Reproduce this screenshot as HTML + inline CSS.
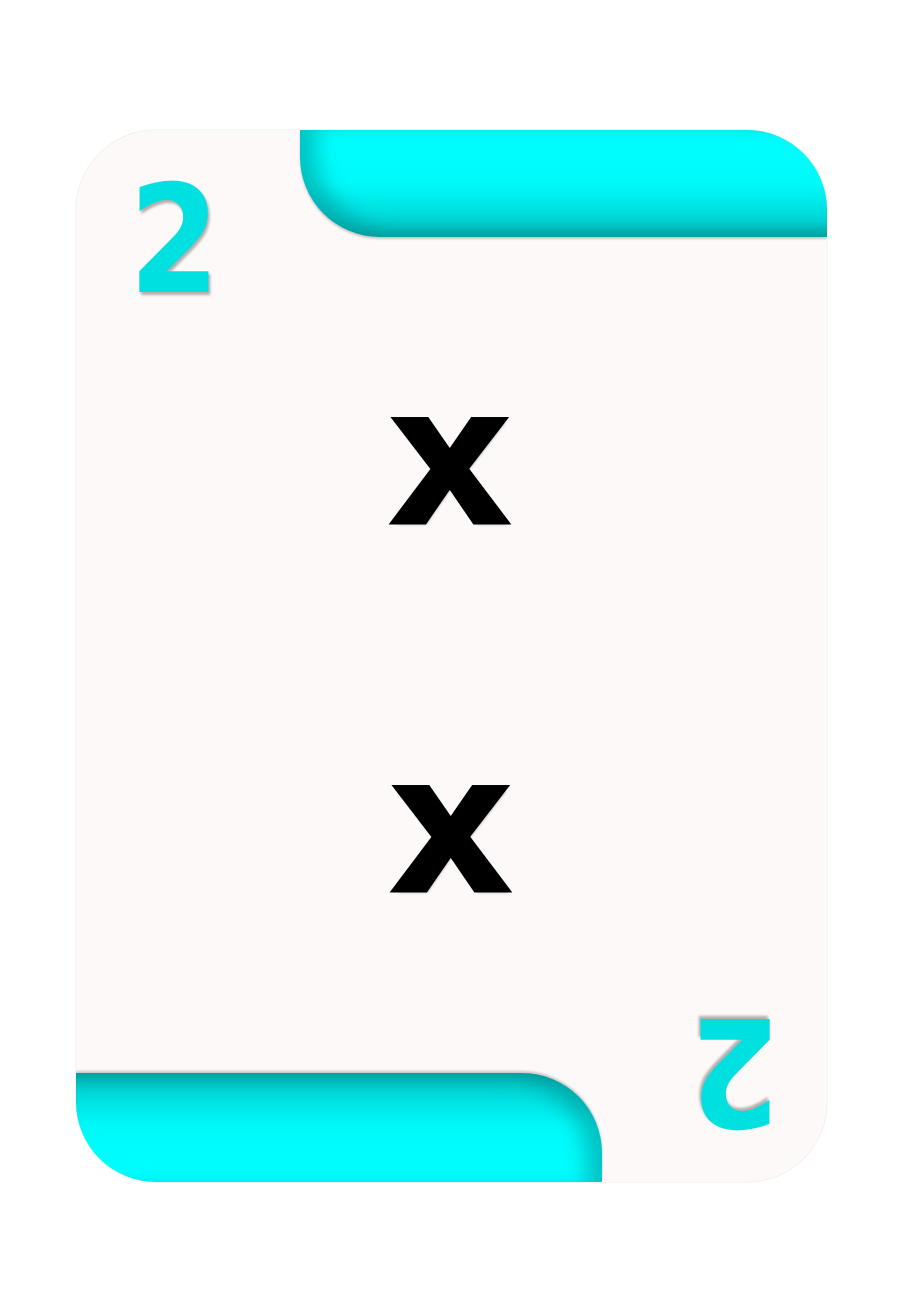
<!DOCTYPE html>
<html><head><meta charset="utf-8">
<style>
html,body{margin:0;padding:0;background:#fff;width:902px;height:1313px;overflow:hidden}
.card{position:absolute;left:76px;top:130px;width:751px;height:1052px;border-radius:80px;background:#fcf9f8;overflow:hidden;box-shadow:0 0 1px rgba(0,0,0,0.25)}
.bandT{position:absolute;left:224px;top:0;width:527px;height:107px;border-bottom-left-radius:80px;
background:linear-gradient(180deg,#00ffff 0%,#00fafa 50%,#00d8d8 85%,#00baba 100%);
box-shadow:0 2px 2px rgba(0,0,0,0.2)}
.bandT::after{content:"";position:absolute;inset:0;border-bottom-left-radius:80px;box-shadow:inset 16px -6px 20px rgba(0,90,90,0.35)}
.bandB{position:absolute;left:0;top:943px;width:526px;height:109px;border-top-right-radius:80px;
background:linear-gradient(0deg,#00ffff 0%,#00fafa 50%,#00d8d8 85%,#00baba 100%);
box-shadow:0 -2px 2px rgba(0,0,0,0.2)}
.bandB::after{content:"";position:absolute;inset:0;border-top-right-radius:80px;box-shadow:inset -16px 6px 20px rgba(0,90,90,0.35)}
.num{position:absolute;font-family:"DejaVu Sans",sans-serif;font-weight:bold;color:#00e0e0;font-size:150px;line-height:1;
text-shadow:2px 3px 3px rgba(0,0,0,0.3);transform:scaleX(0.87);transform-origin:0 0}
.x{position:absolute;font-family:"Liberation Sans",sans-serif;font-weight:bold;color:#000;font-size:205px;line-height:1;
-webkit-text-stroke:6px #000;text-shadow:2px 3px 3px rgba(0,0,0,0.3);transform:scale(1.0,0.94);transform-origin:0 0}
</style></head><body>
<div class="card">
  <div class="bandT"></div>
  <div class="bandB"></div>
</div>
<div class="num" style="left:129px;top:166px">2</div>
<div style="position:absolute;left:688px;top:1004px;width:120px;height:160px;transform:rotate(180deg);transform-origin:46px 70.5px">
  <div class="num" style="left:0;top:0">2</div>
</div>
<div class="x" style="left:393px;top:359px">x</div>
<div class="x" style="left:394px;top:727px">x</div>
</body></html>
